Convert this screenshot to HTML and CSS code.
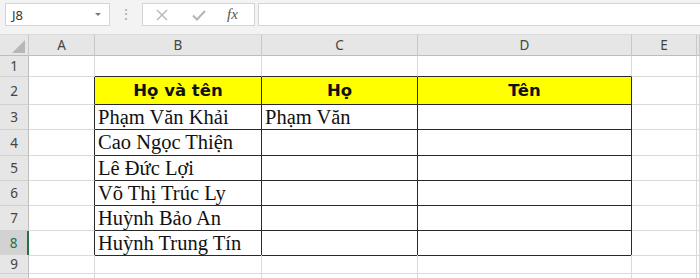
FILE: index.html
```html
<!DOCTYPE html>
<html lang="vi">

<head>
    <meta charset="UTF-8">
    <meta name="viewport" content="width=device-width, initial-scale=1.0">
    <title>Sheet</title>
    <link rel="stylesheet" href="styles.css">
</head>

<body>
    <div class="toolbar">
        <div class="namebox">
            <span class="ref">J8</span>
            <span class="drop"></span>
        </div>
        <div class="dots">⋮</div>
        <div class="fbtns">
            <svg class="ic" width="14" height="14" viewBox="0 0 14 14">
                <path d="M2 2 L12 12 M12 2 L2 12" stroke="#b4b4b4" stroke-width="1.4" fill="none" />
            </svg>
            <svg class="ic" width="16" height="14" viewBox="0 0 16 14">
                <path d="M2 7.5 L6 11.5 L14 3" stroke="#b4b4b4" stroke-width="2" fill="none" />
            </svg>
            <span class="fx">fx</span>
        </div>
        <div class="fbar"></div>
    </div>

    <div class="sheet">
        <div class="row colhead">
            <div class="corner"><span class="tri"></span></div>
            <div class="ch">A</div>
            <div class="ch">B</div>
            <div class="ch">C</div>
            <div class="ch">D</div>
            <div class="ch">E</div>
            <div class="ch"></div>
        </div>
        <div class="row r1">
            <div class="rh">1</div>
            <div class="c"></div>
            <div class="c top"></div>
            <div class="c top"></div>
            <div class="c top"></div>
            <div class="c"></div>
            <div class="c"></div>
        </div>
        <div class="row r2">
            <div class="rh">2</div>
            <div class="c left"></div>
            <div class="c t hd">Họ và tên</div>
            <div class="c t hd">Họ</div>
            <div class="c t hd">Tên</div>
            <div class="c"></div>
            <div class="c"></div>
        </div>
        <div class="row r3">
            <div class="rh">3</div>
            <div class="c left"></div>
            <div class="c t">Phạm Văn Khải</div>
            <div class="c t">Phạm Văn</div>
            <div class="c t"></div>
            <div class="c"></div>
            <div class="c"></div>
        </div>
        <div class="row r4">
            <div class="rh">4</div>
            <div class="c left"></div>
            <div class="c t">Cao Ngọc Thiện</div>
            <div class="c t"></div>
            <div class="c t"></div>
            <div class="c"></div>
            <div class="c"></div>
        </div>
        <div class="row r5">
            <div class="rh">5</div>
            <div class="c left"></div>
            <div class="c t">Lê Đức Lợi</div>
            <div class="c t"></div>
            <div class="c t"></div>
            <div class="c"></div>
            <div class="c"></div>
        </div>
        <div class="row r6">
            <div class="rh">6</div>
            <div class="c left"></div>
            <div class="c t">Võ Thị Trúc Ly</div>
            <div class="c t"></div>
            <div class="c t"></div>
            <div class="c"></div>
            <div class="c"></div>
        </div>
        <div class="row r7">
            <div class="rh">7</div>
            <div class="c left"></div>
            <div class="c t">Huỳnh Bảo An</div>
            <div class="c t"></div>
            <div class="c t"></div>
            <div class="c"></div>
            <div class="c"></div>
        </div>
        <div class="row r8">
            <div class="rh sel">8</div>
            <div class="c left"></div>
            <div class="c t">Huỳnh Trung Tín</div>
            <div class="c t"></div>
            <div class="c t"></div>
            <div class="c"></div>
            <div class="c"></div>
        </div>
        <div class="row r9">
            <div class="rh">9</div>
            <div class="c"></div>
            <div class="c"></div>
            <div class="c"></div>
            <div class="c"></div>
            <div class="c"></div>
            <div class="c"></div>
        </div>
        <div class="row r10">
            <div class="rh"></div>
            <div class="c"></div>
            <div class="c"></div>
            <div class="c"></div>
            <div class="c"></div>
            <div class="c"></div>
            <div class="c"></div>
        </div>
    </div>
</body>

</html>
```

FILE: styles.css
```css
* {
    margin: 0;
    padding: 0;
    box-sizing: border-box;
}

body {
    background-color: #ffffff;
    font-family: "Noto Sans", "Liberation Sans", sans-serif;
    overflow: hidden;
}

.toolbar {
    display: flex;
    align-items: flex-start;
    height: 35px;
    padding: 3px 0 0 5px;
    background-color: #f3f3f3;
    border-bottom: 1px solid #dadada;
}

.namebox {
    display: flex;
    align-items: center;
    justify-content: space-between;
    width: 105px;
    height: 23px;
    padding: 0 8px 0 6px;
    background-color: #ffffff;
    border: 1px solid #d4d4d4;
}

.ref {
    font-size: 13px;
    color: #333333;
}

.drop {
    width: 0;
    height: 0;
    border-left: 3px solid transparent;
    border-right: 3px solid transparent;
    border-top: 3px solid #7a7a7a;
}

.dots {
    width: 32px;
    height: 23px;
    text-align: center;
    line-height: 22px;
    font-size: 14px;
    color: #a8a8a8;
}

.fbtns {
    display: flex;
    align-items: center;
    width: 113px;
    height: 23px;
    padding-left: 12px;
    gap: 22px;
    background-color: #ffffff;
    border: 1px solid #d4d4d4;
}

.fx {
    font-family: "Liberation Serif", serif;
    font-style: italic;
    font-size: 15px;
    color: #555555;
    margin-left: -2px;
}

.fbar {
    flex: 1;
    height: 23px;
    margin-left: 3px;
    background-color: #ffffff;
    border: 1px solid #d4d4d4;
    border-right: none;
}

.row {
    display: grid;
    grid-template-columns: 29px 66px 167px 156px 214px 65px 1fr;
    height: 25px;
}

.colhead {
    height: 21px;
    background-color: #e6e6e6;
    border-bottom: 1px solid #bdbdbd;
}

.r1 {
    height: 21px;
}

.r2 {
    height: 28px;
}

.r4 {
    height: 26px;
}

.r8 {
    height: 24px;
}

.r9 {
    height: 19px;
}

.corner {
    position: relative;
    border-right: 1px solid #c8c8c8;
}

.tri {
    position: absolute;
    right: 3px;
    bottom: 3px;
    width: 0;
    height: 0;
    border-left: 13px solid transparent;
    border-bottom: 13px solid #b7b7b7;
}

.ch {
    text-align: center;
    font-size: 13.5px;
    line-height: 21px;
    color: #444444;
    border-right: 1px solid #c8c8c8;
}

.rh {
    text-align: center;
    font-size: 13.5px;
    color: #444444;
    background-color: #e6e6e6;
    border-right: 1px solid #bdbdbd;
    border-bottom: 1px solid #d0d0d0;
    display: flex;
    align-items: center;
    justify-content: center;
}

.rh.sel {
    background-color: #d2d2d2;
    color: #217346;
    border-right: 2px solid #217346;
}

.c {
    border-right: 1px solid #dadada;
    border-bottom: 1px solid #dadada;
}

.c.top {
    border-bottom: 1px solid #2a2a2a;
}

.c.left {
    border-right: 1px solid #2a2a2a;
}

.c.t {
    border-right: 1px solid #2a2a2a;
    border-bottom: 1px solid #2a2a2a;
    font-family: "Liberation Serif", serif;
    font-size: 20.5px;
    line-height: 24px;
    color: #111111;
    padding-left: 3px;
    white-space: nowrap;
}

.c.hd {
    background-color: #ffff00;
    font-family: "DejaVu Sans", sans-serif;
    font-weight: bold;
    font-size: 16.5px;
    line-height: 27px;
    text-align: center;
    padding-left: 0;
}
```
